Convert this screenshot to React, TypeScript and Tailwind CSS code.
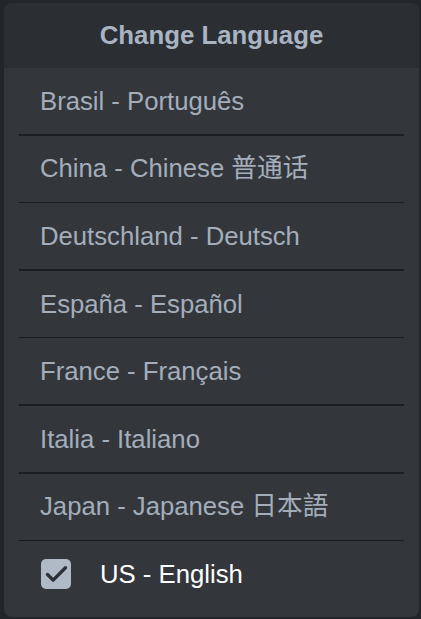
import { Check } from 'lucide-react';

const languages = [
    'Brasil - Português',
    'China - Chinese 普通话',
    'Deutschland - Deutsch',
    'España - Español',
    'France - Français',
    'Italia - Italiano',
    'Japan - Japanese 日本語',
];

export default function App() {
    return (
        <div
            className="w-[421px] h-[619px] bg-[#22252a] pt-[3px] pl-[4px] pr-[2px] pb-[2px] overflow-hidden"
            style={{ fontFamily: '"Liberation Sans", Arial, "Noto Sans CJK SC", sans-serif' }}
        >
            <div className="h-full w-full bg-[#33373c] rounded-lg overflow-hidden flex flex-col">
                {/* Header */}
                <div className="h-[65px] shrink-0 bg-[#2b2e33] flex items-center justify-center pb-px">
                    <h1 className="text-[25.8px] font-bold text-[#a9b4c3]">Change Language</h1>
                </div>

                {/* Options */}
                <div className="flex flex-col px-[15px]">
                    {languages.map((lang) => (
                        <div key={lang} className="flex flex-col">
                            <div className="h-[66px] flex items-center pl-[21px] text-[25.7px] text-[#a4aebb]">
                                {lang}
                            </div>
                            <div className="h-[1.6px] bg-[#1b1e21]"></div>
                        </div>
                    ))}
                    <div className="h-[66px] flex items-center pl-[22px]">
                        <div className="w-[30px] h-[30px] rounded-[5px] bg-[#b0bac6] flex items-center justify-center">
                            <Check className="w-[27px] h-[27px] text-[#2e3237]" strokeWidth={3} />
                        </div>
                        <span className="ml-[29px] text-[25.7px] text-white">US - English</span>
                    </div>
                </div>
            </div>
        </div>
    );
}
